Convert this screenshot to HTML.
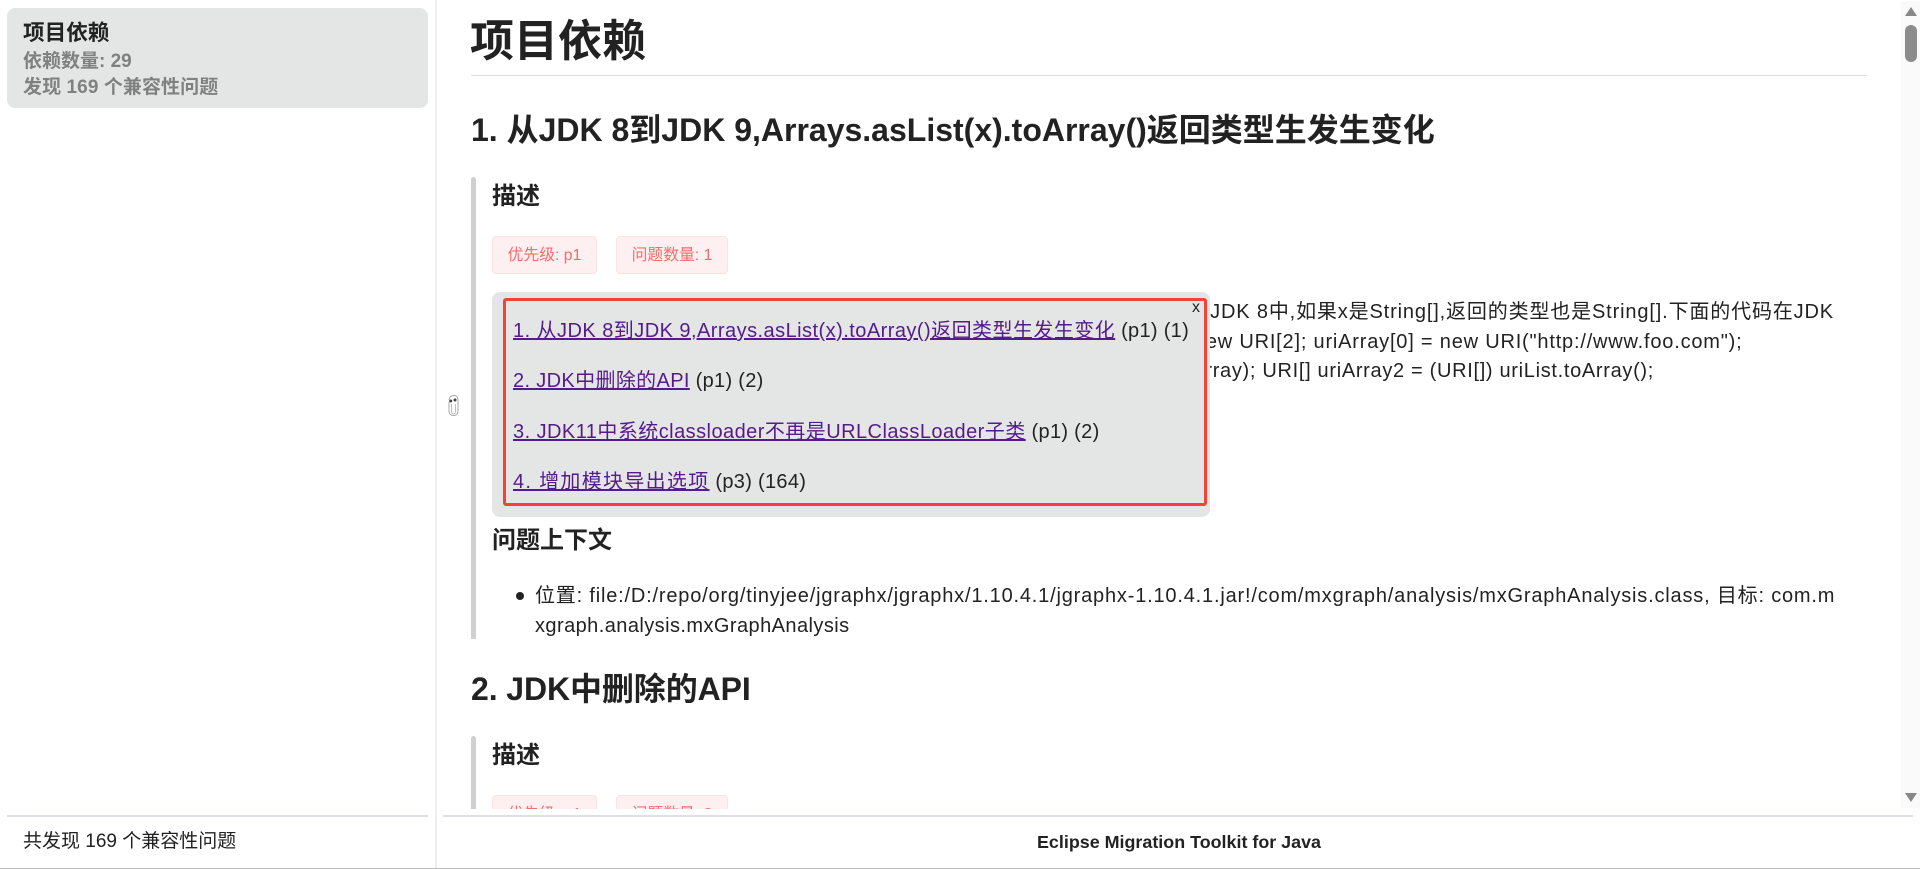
<!DOCTYPE html>
<html lang="zh"><head><meta charset="utf-8"><title>项目依赖</title>
<style>
html,body{margin:0;padding:0;width:1920px;height:869px;overflow:hidden;background:#fff}
body{font-family:"Liberation Sans","Noto Sans CJK SC",sans-serif;color:#222;position:relative}
.a{position:absolute;white-space:nowrap}
.b{font-weight:700}
a{color:#551a8b;text-decoration:underline}
.tag{position:absolute;box-sizing:border-box;height:38px;background:#fef0f0;border:1px solid #fde2e2;border-radius:4px;color:#f56c6c;font-size:15.8px;line-height:38px;text-align:center;white-space:nowrap}
.bar{position:absolute;left:471px;width:5px;background:#d0d0d0;border-radius:3px 3px 0 0}
.l{font-size:20px;line-height:30px}
</style></head><body>
<div class="a" style="left:7px;top:8px;width:421px;height:100px;background:#e4e6e6;border-radius:8px"></div>
<div class="a b" style="left:23px;top:19px;font-size:21.6px;line-height:28px;color:#222">项目依赖</div>
<div class="a b" style="left:23px;top:49px;font-size:19px;line-height:26px;color:#808080">依赖数量: 29</div>
<div class="a b" style="left:23px;top:75px;font-size:19px;line-height:26px;color:#808080;letter-spacing:.08px">发现 169 个兼容性问题</div>
<div class="a" style="left:435px;top:0;width:2px;height:868px;background:#eeeef5"></div>

<div class="a" style="left:438px;top:0;width:1463px;height:809px;overflow:hidden">
<div style="position:absolute;left:-438px;top:0;width:1920px;height:869px">
<div class="a b" style="left:470px;top:12px;font-size:44px;line-height:60px">项目依赖</div>
<div class="a" style="left:471px;top:75px;width:1396px;height:1px;background:#ddd"></div>
<div class="a b" style="left:471px;top:108px;font-size:32px;line-height:44px">1. 从JDK 8到JDK 9,Arrays.asList(x).toArray()返回类型生发生变化</div>
<div class="bar" style="top:177px;height:462px"></div>
<div class="a b" style="left:492px;top:179px;font-size:24px;line-height:36px">描述</div>
<div class="tag" style="left:492px;top:236px;width:105px">优先级: p1</div>
<div class="tag" style="left:616px;top:236px;width:112px">问题数量: 1</div>
<div class="a l" style="right:86px;top:297px;letter-spacing:.85px">从JDK 8到JDK 9,Arrays.asList(x).toArray()返回类型发生变化。在JDK 8中,如果x是String[],返回的类型也是String[].下面的代码在JDK</div>
<div class="a l" style="right:177.5px;top:326.500px;letter-spacing:.8px">URI[] uriArray = new URI[2]; uriArray[0] = new URI("http://www.foo.com");</div>
<div class="a l" style="right:266px;top:356px;letter-spacing:.68px">List uriList = Arrays.asList(uriArray); URI[] uriArray2 = (URI[]) uriList.toArray();</div>
<div class="a" style="left:492px;top:292px;width:718px;height:225px;background:#e4e6e6;border-radius:8px"></div>
<div class="a" style="left:503px;top:298px;width:704px;height:208px;box-sizing:border-box;border:3px solid #f44336;border-radius:3px"></div>
<div class="a" style="left:1192px;top:298px;font-size:16px;line-height:20px">x</div>
<div class="a l" style="left:513px;top:316px"><a style="letter-spacing:.456px">1. 从JDK 8到JDK 9,Arrays.asList(x).toArray()返回类型生发生变化</a><span style="letter-spacing:.3px"> (p1) (1)</span></div>
<div class="a l" style="left:513px;top:366px"><a style="letter-spacing:.35px">2. JDK中删除的API</a><span style="letter-spacing:.3px"> (p1) (2)</span></div>
<div class="a l" style="left:513px;top:417px"><a style="letter-spacing:.45px">3. JDK11中系统classloader不再是URLClassLoader子类</a><span style="letter-spacing:.3px"> (p1) (2)</span></div>
<div class="a l" style="left:513px;top:467px"><a style="letter-spacing:1.3px">4. 增加模块导出选项</a><span style="letter-spacing:.3px"> (p3) (164)</span></div>
<div class="a b" style="left:492px;top:523px;font-size:24px;line-height:36px">问题上下文</div>
<div class="a" style="left:516px;top:592px;width:8px;height:8px;border-radius:50%;background:#222"></div>
<div class="a l" style="left:535px;top:581px;letter-spacing:.81px">位置: file:/D:/repo/org/tinyjee/jgraphx/jgraphx/1.10.4.1/jgraphx-1.10.4.1.jar!/com/mxgraph/analysis/mxGraphAnalysis.class, 目标: com.m</div>
<div class="a l" style="left:535px;top:611px;letter-spacing:.43px">xgraph.analysis.mxGraphAnalysis</div>
<div class="a b" style="left:471px;top:667px;font-size:32px;line-height:44px;letter-spacing:-.1px">2. JDK中删除的API</div>
<div class="bar" style="top:736px;height:100px"></div>
<div class="a b" style="left:492px;top:738px;font-size:24px;line-height:36px">描述</div>
<div class="tag" style="left:492px;top:795px;width:105px">优先级: p1</div>
<div class="tag" style="left:616px;top:795px;width:112px">问题数量: 2</div>
</div></div>

<svg class="a" style="left:446px;top:393px" width="14" height="24" viewBox="0 0 14 24" fill="none">
<path d="M5.500 11V18.500C5.500 20 6.300 20.800 7.500 20.800S9.500 20 9.500 18.500V11" stroke="#b0b0b0" stroke-width=".8"/>
<path d="M3 9V18C3 21 5 22.500 7.500 22.500S12 21 12 18V7C12 4 10.500 2.500 8 2.500S3.500 4 3 7" stroke="#a0a0a0" stroke-width=".9"/>
<circle cx="4.700" cy="8" r="1.500" fill="#444"/><circle cx="9" cy="7" r="1.500" fill="#444"/>
</svg>

<div class="a" style="left:1901px;top:1px;width:19px;height:807px;background:#fafafa"></div>
<svg class="a" style="left:1901px;top:0" width="19" height="808" viewBox="0 0 19 808">
<path d="M10 7L16 16H4Z" fill="#888"/>
<rect x="4" y="25" width="12" height="37" rx="6" fill="#8c8c8c"/>
<path d="M4 793H16L10 802Z" fill="#888"/>
</svg>

<div class="a" style="left:7px;top:815px;width:421px;height:2px;background:#dde0e6"></div>
<div class="a" style="left:443px;top:815px;width:1470px;height:2px;background:#dde0e6"></div>
<div class="a" style="left:435px;top:817px;width:2px;height:51px;background:#eee"></div>
<div class="a" style="left:23px;top:829px;font-size:19px;line-height:26px">共发现 169 个兼容性问题</div>
<div class="a b" style="left:1027px;top:829px;width:304px;text-align:center;font-size:17.900px;line-height:26px">Eclipse Migration Toolkit for Java</div>
<div class="a" style="left:0;top:868px;width:1920px;height:1px;background:#bbb"></div>
</body></html>
